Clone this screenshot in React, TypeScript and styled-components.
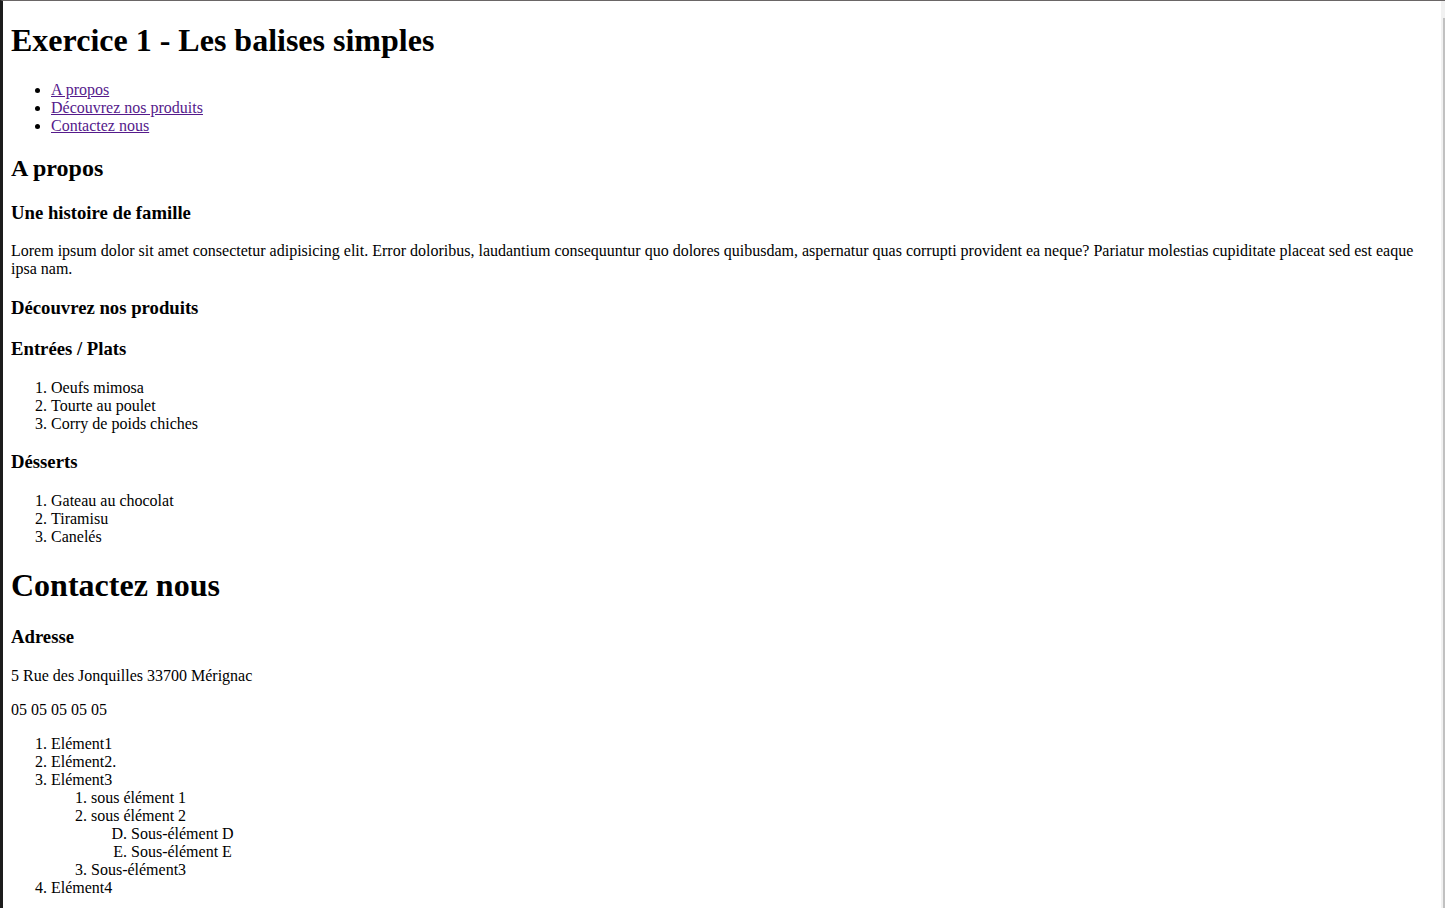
import React from "react";
import styled, { createGlobalStyle } from "styled-components";

const Global = createGlobalStyle`
  html {
    border-top: 1px solid #6a6666;
    border-left: 3px solid #1c1c1c;
    background: #ffffff;
  }
  body {
    margin: 0 12px 8px 8px;
    font-family: "Liberation Serif", "Times New Roman", serif;
    font-size: 16px;
    color: #000;
  }
`;

const Title = styled.h1<{ $small?: boolean }>`
  font-size: ${(p) => (p.$small ? "24px" : "32px")};
  margin: ${(p) => (p.$small ? "19.92px" : "21.44px")} 0;
  font-weight: bold;
`;

const Sub = styled.h3`
  font-size: 18.72px;
  margin: 18.72px 0;
  font-weight: bold;
`;

const Para = styled.p`
  margin: 16px 0;
`;

const Menu = styled.ul`
  margin: 16px 0;
  padding-left: 40px;
  list-style: disc;
`;

const NumList = styled.ol<{ $nested?: boolean }>`
  margin: ${(p) => (p.$nested ? "0" : "16px 0")};
  padding-left: 40px;
`;

const MenuLink = styled.a`
  color: #551a8b;
  text-decoration: underline;
`;

const ScrollTrack = styled.div`
  position: fixed;
  top: 1px;
  right: 0;
  bottom: 0;
  width: 4px;
  background: #f1f1f1;
  display: flex;
  justify-content: flex-end;
  padding-top: 17px;
  box-sizing: border-box;
`;

const ScrollThumb = styled.div`
  width: 2px;
  height: 100%;
  background: #c1c1c1;
`;

export default function App() {
  return (
    <>
      <Global />
      <Title>Exercice 1 - Les balises simples</Title>
      <Menu>
        <li><MenuLink href="#apropos">A propos</MenuLink></li>
        <li><MenuLink href="#produits">Découvrez nos produits</MenuLink></li>
        <li><MenuLink href="#contact">Contactez nous</MenuLink></li>
      </Menu>
      <section id="apropos">
        <Title $small as="h2">A propos</Title>
        <Sub>Une histoire de famille</Sub>
        <Para>
          Lorem ipsum dolor sit amet consectetur adipisicing elit. Error doloribus, laudantium consequuntur quo dolores quibusdam, aspernatur quas corrupti provident ea neque? Pariatur molestias cupiditate placeat sed est eaque ipsa nam.
        </Para>
      </section>
      <section id="produits">
        <Sub>Découvrez nos produits</Sub>
        <Sub>Entrées / Plats</Sub>
        <NumList>
          <li>Oeufs mimosa</li>
          <li>Tourte au poulet</li>
          <li>Corry de poids chiches</li>
        </NumList>
        <Sub>Désserts</Sub>
        <NumList>
          <li>Gateau au chocolat</li>
          <li>Tiramisu</li>
          <li>Canelés</li>
        </NumList>
      </section>
      <section id="contact">
        <Title as="h2">Contactez nous</Title>
        <Sub>Adresse</Sub>
        <Para>5 Rue des Jonquilles 33700 Mérignac</Para>
        <Para>05 05 05 05 05</Para>
        <NumList>
          <li>Elément1</li>
          <li>Elément2.</li>
          <li>
            Elément3
            <NumList $nested>
              <li>sous élément 1</li>
              <li>
                sous élément 2
                <NumList $nested type="A" start={4}>
                  <li>Sous-élément D</li>
                  <li>Sous-élément E</li>
                </NumList>
              </li>
              <li>Sous-élément3</li>
            </NumList>
          </li>
          <li>Elément4</li>
        </NumList>
      </section>
      <ScrollTrack>
        <ScrollThumb />
      </ScrollTrack>
    </>
  );
}
